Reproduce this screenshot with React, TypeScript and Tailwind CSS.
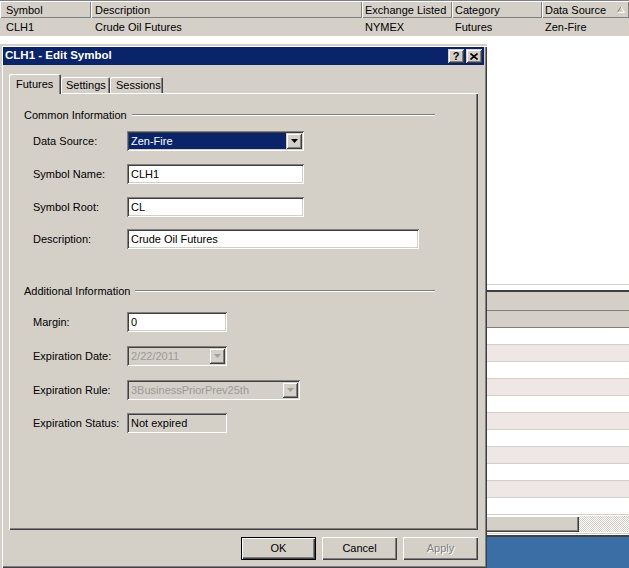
import type { ReactNode } from 'react'

// classic 3D bevels
const sunken = 'shadow-[inset_1px_1px_#808080,inset_-1px_-1px_#fff,inset_2px_2px_#404040,inset_-2px_-2px_#d4d0c8]'
const raised = 'shadow-[inset_1px_1px_#d4d0c8,inset_-1px_-1px_#404040,inset_2px_2px_#fff,inset_-2px_-2px_#808080]'
const btnRaised = 'shadow-[inset_1px_1px_#fff,inset_-1px_-1px_#404040,inset_-2px_-2px_#808080]'

const columns = [
  { title: 'Symbol', value: 'CLH1', cls: 'w-[91px] pl-[6px]' },
  { title: 'Description', value: 'Crude Oil Futures', cls: 'w-[271px] pl-[4px]' },
  { title: 'Exchange Listed', value: 'NYMEX', cls: 'w-[90px] pl-[3px]' },
  { title: 'Category', value: 'Futures', cls: 'w-[90px] pl-[3px]' },
  { title: 'Data Source', value: 'Zen-Fire', cls: 'flex-1 pl-[3px]' },
]

/** The symbol grid sitting behind the dialog. */
function Background() {
  return (
    <div className="flex h-full w-full flex-col">
      <div className="flex h-[18px] border-t border-[#808080] bg-[#d4d0c8]">
        {columns.map((c, i) => (
          <div
            key={c.title}
            className={`relative flex items-center pt-[2px] shadow-[inset_1px_1px_#fff,inset_-1px_-1px_#808080] ${c.cls}`}
          >
            {c.title}
            {i === columns.length - 1 && (
              <svg className="absolute right-[4px] top-[5px]" width="8" height="7" viewBox="0 0 8 7">
                <path d="M0.5 6.5 L4 0.5" stroke="#808080" fill="none" />
                <path d="M4 0.5 L7.5 6.5 L0.5 6.5" stroke="#fff" fill="none" />
              </svg>
            )}
          </div>
        ))}
      </div>
      <div className="flex h-[18px] bg-[#d4d0c8]">
        {columns.map((c) => (
          <div key={c.title} className={`flex items-center ${c.cls}`}>
            {c.value}
          </div>
        ))}
      </div>
      <div className="h-[248px] bg-white" />
      <div className="h-px bg-[#d4d0c8]" />
      <div className="h-[5px] bg-white" />
      <div className="h-[2px] bg-[#404040]" />
      <div className="h-[18px] bg-[#d4d0c8]" />
      <div className="h-px bg-[#808080]" />
      <div className="h-[16px] bg-[#d4d0c8]" />
      <div className="h-px bg-[#808080]" />
      {Array.from({ length: 11 }).map((_, i) => (
        <div
          key={i}
          className={`h-[17px] border-b border-[#d4d0c8] ${i % 2 === 1 ? 'bg-[#efe6e6]' : 'bg-white'}`}
        />
      ))}
      <div className="h-px bg-white" />
      <div className="flex h-[16px]">
        <div className={`w-[579px] bg-[#d4d0c8] ${btnRaised}`} />
        <div className="flex-1 bg-[image:repeating-conic-gradient(#d4d0c8_0_25%,#fff_0_50%)] bg-[length:2px_2px]" />
      </div>
      <div className="h-px bg-white" />
      <div className="h-px bg-[#d4d0c8]" />
      <div className="h-px bg-white" />
      <div className="h-[2px] bg-[#404040]" />
      <div className="flex-1 bg-[#3a6ea5]" />
    </div>
  )
}

function Arrow({ disabled }: { disabled?: boolean }) {
  return (
    <div className={`flex h-full w-[16px] items-center justify-center bg-[#d4d0c8] ${raised}`}>
      <svg width="7" height="4" viewBox="0 0 7 4">
        <polygon points="0,0 7,0 3.5,4" fill={disabled ? '#a0a0a0' : '#000'} />
      </svg>
    </div>
  )
}

function TextBox({ value, className, gray }: { value: string; className: string; gray?: boolean }) {
  return (
    <div className={`flex h-[20px] items-center pl-[4px] ${gray ? 'bg-[#d4d0c8]' : 'bg-white'} ${sunken} ${className}`}>
      {value}
    </div>
  )
}

function Combo({ value, className, focused, disabled }: { value: string; className: string; focused?: boolean; disabled?: boolean }) {
  return (
    <div className={`flex h-[20px] p-[2px] ${disabled ? 'bg-[#d4d0c8]' : 'bg-white'} ${sunken} ${className}`}>
      <div
        className={`flex flex-1 items-center pl-[2px] ${
          focused ? 'bg-[#0a246a] text-white' : disabled ? 'text-[#9a9a9a]' : ''
        }`}
      >
        {value}
      </div>
      <Arrow disabled={disabled} />
    </div>
  )
}

function Row({ label, className, children }: { label: string; className: string; children: ReactNode }) {
  return (
    <div className={`flex items-center pl-[9px] ${className}`}>
      <span className="w-[94px]">{label}</span>
      {children}
    </div>
  )
}

function GroupHead({ title, className }: { title: string; className: string }) {
  return (
    <div className={`flex h-[14px] w-[411px] items-center gap-[5px] ${className}`}>
      <span className="whitespace-nowrap">{title}</span>
      <div className="h-[2px] flex-1 border-b border-t border-b-white border-t-[#808080]" />
    </div>
  )
}

function EditSymbolDialog() {
  return (
    <div className="absolute left-0 top-[44px] flex h-[524px] w-[487px] flex-col bg-[#d4d0c8] p-[3px] shadow-[inset_2px_2px_#d4d0c8,inset_3px_3px_#fff,inset_-1px_-1px_#404040,inset_-2px_-2px_#808080]">
      {/* title bar */}
      <div className="flex h-[18px] items-center justify-between bg-[#0a246a] pl-[2px] pr-[2px]">
        <span className="text-[11.5px] font-bold text-white">CLH1 - Edit Symbol</span>
        <div className="flex gap-[2px]">
          <div className={`flex h-[14px] w-[16px] items-center justify-center bg-[#d4d0c8] text-[11px] font-bold leading-none ${raised}`}>
            ?
          </div>
          <div className={`flex h-[14px] w-[16px] items-center justify-center bg-[#d4d0c8] ${raised}`}>
            <svg width="8" height="7" viewBox="0 0 8 7">
              <path d="M0.5 0.5 L7.5 6.5 M7.5 0.5 L0.5 6.5" stroke="#000" strokeWidth="1.6" />
            </svg>
          </div>
        </div>
      </div>

      <div className="mt-[9px] flex flex-col px-[6px]">
        {/* tabs */}
        <div className="flex h-[19px] items-end">
          <div className="relative z-10 -mb-px flex h-[20px] w-[52px] items-center rounded-t-[2px] bg-[#d4d0c8] pl-[7px] shadow-[inset_1px_1px_#fff,inset_-1px_0_#404040,inset_-2px_0_#808080]">
            Futures
          </div>
          <div className="flex h-[16px] w-[49px] items-center rounded-t-[2px] pl-[5px] shadow-[inset_1px_1px_#fff,inset_-1px_0_#404040,inset_-2px_0_#808080]">
            Settings
          </div>
          <div className="flex h-[16px] w-[53px] items-center rounded-t-[2px] pl-[6px] shadow-[inset_1px_1px_#fff,inset_-1px_0_#404040,inset_-2px_0_#808080]">
            Sessions
          </div>
        </div>

        {/* tab panel */}
        <div className={`flex h-[437px] flex-col pl-[15px] ${btnRaised}`}>
          <GroupHead title="Common Information" className="mt-[15px]" />
          <Row label="Data Source:" className="mt-[9px]">
            <Combo value="Zen-Fire" className="w-[177px]" focused />
          </Row>
          <Row label="Symbol Name:" className="mt-[13px]">
            <TextBox value="CLH1" className="w-[177px]" />
          </Row>
          <Row label="Symbol Root:" className="mt-[13px]">
            <TextBox value="CL" className="w-[177px]" />
          </Row>
          <Row label="Description:" className="mt-[12px]">
            <TextBox value="Crude Oil Futures" className="w-[292px]" />
          </Row>

          <GroupHead title="Additional Information" className="mt-[35px]" />
          <Row label="Margin:" className="mt-[14px]">
            <TextBox value="0" className="w-[100px]" />
          </Row>
          <Row label="Expiration Date:" className="mt-[14px]">
            <Combo value="2/22/2011" className="w-[100px]" disabled />
          </Row>
          <Row label="Expiration Rule:" className="mt-[14px]">
            <Combo value="3BusinessPriorPrev25th" className="w-[173px]" disabled />
          </Row>
          <Row label="Expiration Status:" className="mt-[13px]">
            <TextBox value="Not expired" className="w-[100px]" gray />
          </Row>
        </div>

        {/* buttons */}
        <div className="mt-[7px] flex justify-end gap-[6px]">
          <button className={`h-[23px] w-[75px] border border-black bg-[#d4d0c8] ${btnRaised}`}>OK</button>
          <button className={`h-[23px] w-[75px] bg-[#d4d0c8] ${btnRaised}`}>Cancel</button>
          <button className={`h-[23px] w-[75px] bg-[#d4d0c8] text-[#808080] [text-shadow:1px_1px_#fff] ${btnRaised}`}>
            Apply
          </button>
        </div>
      </div>
    </div>
  )
}

export default function App() {
  return (
    <div className="relative h-[568px] w-[629px] overflow-hidden bg-white font-['Liberation_Sans',Arial,sans-serif] text-[11px] text-black">
      <Background />
      <EditSymbolDialog />
    </div>
  )
}
